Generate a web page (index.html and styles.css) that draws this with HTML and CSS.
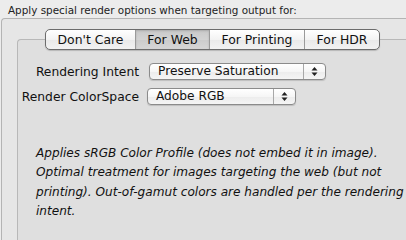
FILE: index.html
```html
<!DOCTYPE html>
<html>
<head>
<meta charset="utf-8">
<link rel="stylesheet" href="styles.css">
</head>
<body>
<div class="title">Apply special render options when targeting output for:</div>
<div class="outer">
  <div class="tabs">
    <div class="seg seg-dc">Don't Care</div>
    <div class="seg seg-web selected">For Web</div>
    <div class="seg seg-print">For Printing</div>
    <div class="seg seg-hdr">For HDR</div>
  </div>
  <div class="inner">
    <div class="form">
      <div class="label">Rendering Intent</div>
      <div class="popup popup-intent"><span class="ptext">Preserve Saturation</span><span class="arrows"><svg width="7" height="11" viewBox="0 0 7 11"><path d="M3.5 1 L6.5 4.5 L0.5 4.5 Z M3.5 10 L6.5 6.5 L0.5 6.5 Z" fill="#222"/></svg></span></div>
      <div class="label">Render ColorSpace</div>
      <div class="popup popup-space"><span class="ptext">Adobe RGB</span><span class="arrows"><svg width="7" height="11" viewBox="0 0 7 11"><path d="M3.5 1 L6.5 4.5 L0.5 4.5 Z M3.5 10 L6.5 6.5 L0.5 6.5 Z" fill="#222"/></svg></span></div>
    </div>
    <p class="desc">Applies sRGB Color Profile (does not embed it in image).<br>Optimal treatment for images targeting the web (but not<br>printing). Out-of-gamut colors are handled per the rendering<br>intent.</p>
  </div>
</div>
</body>
</html>
```
FILE: styles.css
```css
html, body {
  margin: 0;
  padding: 0;
  height: 100%;
  overflow: hidden;
}
body {
  background: #ececec;
  font-family: "DejaVu Sans", Verdana, sans-serif;
  color: #111;
  display: flex;
  flex-direction: column;
}
.title {
  font-size: 10.4px;
  color: #222;
  padding-left: 8px;
  height: 18px;
  line-height: 17px;
  margin-top: 2px;
  margin-bottom: -2px;
  flex: none;
}
.outer {
  flex: 1;
  min-height: 0;
  display: flex;
  flex-direction: column;
  align-items: flex-start;
  margin-left: 1px;
  border-top: 1px solid #b4b4b4;
  border-left: 1px solid #b4b4b4;
  border-top-left-radius: 4px;
  background: #e6e6e6;
  padding: 10px 0 0 15px;
}
.tabs {
  display: flex;
  flex: none;
  margin-left: 28px;
  width: 333px;
  height: 19px;
  border: 1px solid #6c6c6c;
  border-radius: 5px;
  background: linear-gradient(#ffffff, #f3f3f3 50%, #e9e9e9 51%, #f2f2f2);
  box-shadow: 0 1px 1px rgba(0,0,0,0.18);
  position: relative;
  z-index: 1;
  margin-bottom: -11px;
  overflow: hidden;
}
.seg {
  font-size: 12.4px;
  line-height: 19px;
  text-align: center;
  border-left: 1px solid #9a9a9a;
  color: #111;
}
.seg:first-child { border-left: none; }
.seg-dc { width: 89px; }
.seg-web { width: 73px; }
.seg-print { width: 94px; }
.seg-hdr { flex: 1; }
.seg.selected {
  background: linear-gradient(#c9c9c9, #d3d3d3 50%, #cbcbcb 51%, #d6d6d6);
  box-shadow: inset 0 1px 2px rgba(0,0,0,0.15);
}
.inner {
  flex: 1;
  align-self: stretch;
  min-height: 0;
  border-top: 1px solid #b8b8b8;
  border-left: 1px solid #b8b8b8;
  border-top-left-radius: 4px;
  background: #dfdfdf;
  padding-top: 23px;
}
.form {
  display: grid;
  grid-template-columns: 117px auto;
  column-gap: 8px;
  row-gap: 8px;
  align-items: center;
  justify-items: start;
  padding-left: 4px;
}
.label {
  justify-self: end;
  font-size: 12.3px;
  color: #111;
  white-space: nowrap;
}
.popup {
  display: flex;
  align-items: center;
  height: 15px;
  border: 1px solid #8b8b8b;
  border-radius: 4px;
  background: linear-gradient(#ffffff, #f6f6f6 50%, #ececec 51%, #f5f5f5);
  box-shadow: 0 1px 1px rgba(0,0,0,0.15);
  font-size: 12.2px;
}
.popup-intent { width: 175px; margin-left: 2px; }
.popup-space { width: 147px; }
.ptext {
  flex: 1;
  padding-left: 8px;
  line-height: 15px;
  white-space: nowrap;
}
.arrows {
  width: 21px;
  height: 15px;
  border-left: 1px solid #a8a8a8;
  display: flex;
  align-items: center;
  justify-content: center;
}
.arrows svg { display: block; }
.desc {
  margin: 39px 0 0 18px;
  font-size: 12.1px;
  font-style: italic;
  line-height: 19.3px;
  color: #111;
  white-space: nowrap;
}
```
